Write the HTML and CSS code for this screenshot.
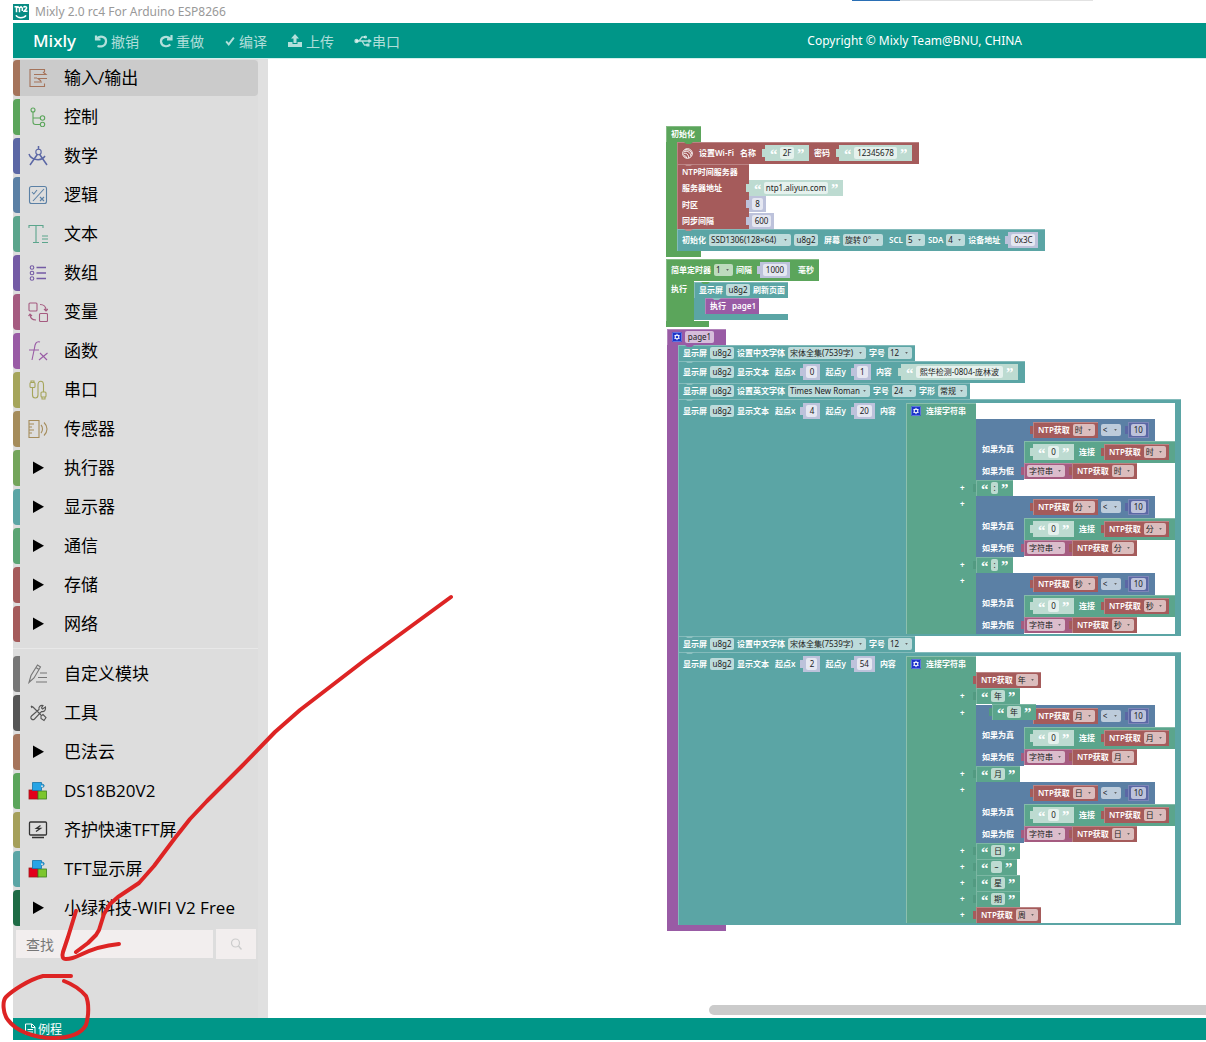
FILE: index.html
```html
<!DOCTYPE html>
<html lang="zh-CN">
<head>
<meta charset="utf-8">
<title>Mixly 2.0 rc4 For Arduino ESP8266</title>
<link rel="stylesheet" href="styles.css">
</head>
<body>
<svg class="defs" aria-hidden="true">
  <symbol id="gear" viewBox="0 0 10 10"><rect width="10" height="10" rx="1.5" fill="#1d35c9"/><rect x=".5" y=".5" width="9" height="9" rx="1" fill="none" stroke="#8fa0ee" stroke-width=".6"/><circle cx="5" cy="5" r="1.900" fill="none" stroke="#fff" stroke-width="1.100"/><path d="M5 1.800v1M5 7.200v1M2.300 3.400l.8.500M6.900 6.100l.8.500M7.700 3.400l-.8.500M3.100 6.100l-.8.500" stroke="#fff" stroke-width=".8"/></symbol>
  <symbol id="cubes" viewBox="0 0 20 20"><rect x="1" y="9" width="9" height="9" fill="#e3001b" stroke="#9c1a1a" stroke-width=".8"/><rect x="10" y="10" width="8.5" height="8" fill="#7cc62d" stroke="#3c7d1e" stroke-width=".8"/><path d="M4.500 1.500h9v2c3-1.600 4 3.600 0 2.600v3.400h-9z" fill="#27a4e5" stroke="#1573a8" stroke-width=".8"/><circle cx="14" cy="5.300" r="1" fill="#ddd"/></symbol>
  <symbol id="play" viewBox="0 0 20 20"><path d="M5 3.500v12.500L16 9.700z" fill="#000"/></symbol>
</svg>

<header class="titlebar">
  <svg class="logo" viewBox="0 0 16 16" aria-hidden="true"><rect width="16" height="16" fill="#078b83"/><path d="M1.500 2.800h2v5.500M3.500 4l1.500-1.200L6.500 4v4.300M6.500 4L8 2.800 9.300 4v3M10.500 3.500c1-1.500 3.500-1 3 .8-.3 1.200-2 1.700-2.500 3h3.500" fill="none" stroke="#fff" stroke-width="1.500"/><path d="M3 11.300c1.500 3.200 8 3.200 10 0" fill="none" stroke="#fff" stroke-width="1.500"/></svg>
  <span class="title">Mixly 2.0 rc4 For Arduino ESP8266</span>
  <span class="load"></span>
</header>

<div class="app">
  <div class="topbar">
    <strong class="brand">Mixly</strong>
    <nav class="actions">
      <button type="button"><svg class="ic14" viewBox="0 0 14 14"><path d="M2 1.500v4h4.500M2.500 5C5.500 1 12.500 2.500 12 7.600 11.600 12 7 13.200 3.500 12" fill="none" stroke="currentColor" stroke-width="2.200"/></svg>撤销</button>
      <button type="button"><svg class="ic14" viewBox="0 0 14 14"><path d="M12.500 1v4.500H8M11.500 5.200C8.500 1 1.700 3 2 7.600 2.400 12.500 8.500 13.500 11.300 10.500" fill="none" stroke="currentColor" stroke-width="2.200"/></svg>重做</button>
      <button type="button"><svg class="ic12" viewBox="0 0 12 14"><path d="M1.500 7.500l3 3.500 6-8" fill="none" stroke="currentColor" stroke-width="2.200"/></svg>编译</button>
      <button type="button"><svg class="ic16" viewBox="0 0 16 14"><path d="M8 0l4 4.500H9.500V9h-3V4.500H4z" fill="currentColor"/><path d="M1 8h4.500v2h5V8H15v5H1z" fill="currentColor"/></svg>上传</button>
      <button type="button" class="tight"><svg class="ic18" viewBox="0 0 18 14"><circle cx="2.500" cy="7" r="2.200" fill="currentColor"/><path d="M2 7h13M5 7l3-4h3M8 7l2.500 4H13" fill="none" stroke="currentColor" stroke-width="1.300"/><path d="M14.500 4.800L18 7l-3.500 2.200zM12.500 9.500h3v3h-3z" fill="currentColor"/><circle cx="11.500" cy="3" r="1.600" fill="currentColor"/></svg>串口</button>
    </nav>
    <span class="copyright">Copyright © Mixly Team@BNU, CHINA</span>
  </div>

  <main class="main">
    <aside class="side">
      <ul class="cats">
        <li class="cat c-io on"><svg viewBox="0 0 20 20"><path d="M16.500 4V1.500H2v17h14.500V15.500M6 6.500h12l-3-2.500M6 10h3M19 10.500h-9l3 2.500M6 14h8"/></svg>输入/输出</li>
        <li class="cat c-ctl"><svg viewBox="0 0 20 20"><circle cx="5" cy="3" r="2"/><circle cx="14.500" cy="11" r="2.200"/><circle cx="14.500" cy="17.500" r="2.200"/><path d="M5 5v10q0 2.500 2.500 2.500h4.800M5 11h7.300"/></svg>控制</li>
        <li class="cat c-math"><svg viewBox="0 0 20 20"><circle cx="10.500" cy="6" r="2.700"/><path d="M10.500 0v3.300M9.300 8.500L2 19M11.700 8.500L19 19M1 8c2 6 12 8 16 2" stroke-width="1.500"/></svg>数学</li>
        <li class="cat c-logic"><svg viewBox="0 0 20 20"><rect x="1.500" y="1.500" width="17" height="17" rx="2"/><path d="M16 4L5 16M4 7l1.800 2L9 5M12 12l4 4M16 12l-4 4"/></svg>逻辑</li>
        <li class="cat c-text"><svg viewBox="0 0 20 20"><path d="M1 4V1.500h14V4M8 1.500v17M5 18.500h6M14 12h6M14 15h6M14 18.500h6"/></svg>文本</li>
        <li class="cat c-list"><svg viewBox="0 0 20 20"><circle cx="4" cy="4.500" r="1.800"/><circle cx="4" cy="10" r="1.800"/><circle cx="4" cy="15.500" r="1.800"/><path d="M8.500 4.500H18M8.500 10H18M8.500 15.500H18" stroke-width="1.500"/></svg>数组</li>
        <li class="cat c-var"><svg viewBox="0 0 20 20"><rect x="1" y="1" width="8" height="8" rx="1"/><rect x="11.500" y="11.500" width="8" height="8" rx="1"/><path d="M12 2.500c4 0 6 2 6 6M16 7l2 2 2-2M8 18c-4 0-6-2-6-6M.500 14L2 12l2 2"/></svg>变量</li>
        <li class="cat c-fn"><svg viewBox="0 0 20 20"><path d="M12 1c-4-1-5 2-5.500 6L4 19M1 9h10M12 12l7 7M19.500 12L11 19"/></svg>函数</li>
        <li class="cat c-ser"><svg viewBox="0 0 20 20"><rect x="2" y="2.500" width="5" height="5" rx="1"/><rect x="13" y="12" width="5" height="5" rx="1"/><path d="M3 2.500V1h3v1.500M4.500 7.500V15c0 4 5.500 4 5.500 0V5c0-5 5.500-5 5.500 0v7M14 17v2h3v-2"/></svg>串口</li>
        <li class="cat c-sen"><svg viewBox="0 0 20 20"><path d="M1 1.500h10v17H1zM1 5h5M1 8h3M1 11h5M1 14h3M13 6c2 2 2 6 0 8M16 3.500c4 4 4 9 0 13"/></svg>传感器</li>
        <li class="cat c-act"><svg viewBox="0 0 20 20"><use href="#play"/></svg>执行器</li>
        <li class="cat c-dis"><svg viewBox="0 0 20 20"><use href="#play"/></svg>显示器</li>
        <li class="cat c-com"><svg viewBox="0 0 20 20"><use href="#play"/></svg>通信</li>
        <li class="cat c-sto"><svg viewBox="0 0 20 20"><use href="#play"/></svg>存储</li>
        <li class="cat c-net"><svg viewBox="0 0 20 20"><use href="#play"/></svg>网络</li>
        <li class="rule" role="separator"></li>
        <li class="cat c-cus"><svg viewBox="0 0 20 20"><path d="M1 18.500l2-7L9.500 1l3 2L6 14zM8 3.500l3 2M12 9h7M10 13.500h9M8 18h11"/></svg>自定义模块</li>
        <li class="cat c-tool"><svg viewBox="0 0 20 20"><path d="M3 3l2 1 8 8M4 5L3 3M13 13l2-1.500 3 3-2 3-3-2zM17.500 4l-3 2-1-1L15 2.500c-3-.5-4.500 1.500-4 4L3.500 13c-2 2 1 5 3 3l7-7.500c3 .5 4.500-1.500 4-4.500z"/></svg>工具</li>
        <li class="cat c-io"><svg viewBox="0 0 20 20"><use href="#play"/></svg>巴法云</li>
        <li class="cat c-ctl"><svg viewBox="0 0 20 20"><use href="#cubes"/></svg>DS18B20V2</li>
        <li class="cat c-qh"><svg viewBox="0 0 20 20"><path d="M2.500 2h15q1 0 1 1v11q0 1-1 1h-15q-1 0-1-1V3q0-1 1-1zM4 17.500h12M12.500 5.500l-4 2.800h4L8 11.500" stroke="#333" stroke-width="1.300"/></svg>齐护快速TFT屏</li>
        <li class="cat c-dis"><svg viewBox="0 0 20 20"><use href="#cubes"/></svg>TFT显示屏</li>
        <li class="cat c-xl"><svg viewBox="0 0 20 20"><use href="#play"/></svg>小绿科技-WIFI V2 Free</li>
      </ul>
      <form class="search">
        <input type="text" placeholder="查找" aria-label="查找">
        <button type="button" aria-label="搜索"><svg class="ic14" viewBox="0 0 14 14"><circle cx="6.500" cy="6" r="4" fill="none" stroke="#ccc" stroke-width="1.200"/><path d="M9.500 9l3 3.500" stroke="#ccc" stroke-width="1.400"/></svg></button>
      </form>
    </aside>

    <section class="canvas">
      <div class="stack at-init">
        <div class="row h16 cap35 green"><b>初始化</b></div>
        <div class="body green">
          <div class="row h22 red notch n-green">
            <svg class="ic11" viewBox="0 0 11 11" fill="none" stroke="#fff"><circle cx="5.500" cy="5.500" r="4.800"/><path d="M2 4c3-2 6 0 7 4M1.500 6c3-2 5 1 5.500 4M3 2c3-1 6 1 7 4M2 8c1-1 2 0 2.500 2"/></svg>
            <b>设置Wi-Fi</b><b>名称</b>
            <span class="val str light"><input class="f w14" value="2F" aria-label="名称"></span>
            <b>密码</b>
            <span class="val str light"><input class="f w43" value="12345678" aria-label="密码"></span>
          </div>
          <div class="line"><div class="row h16 ntp red notch n-red"><b>NTP时间服务器</b></div></div>
          <div class="line"><div class="row h16 ntp red plain"><b>服务器地址</b></div><span class="val join str light"><input class="f w64" value="ntp1.aliyun.com" aria-label="服务器地址"></span></div>
          <div class="line"><div class="row h17 ntp red plain"><b>时区</b></div><span class="val join num"><input class="f w11" value="8" aria-label="时区"></span></div>
          <div class="line"><div class="row h16 ntp red plain"><b>同步间隔</b></div><span class="val join num"><input class="f w19" value="600" aria-label="同步间隔"></span></div>
          <div class="row h22 teal notch n-red">
            <b>初始化</b><select class="f w82" aria-label="型号"><option>SSD1306(128×64)</option></select><input class="f w24 gapl" value="u8g2" aria-label="名称"><b class="gapl">屏幕</b><select class="f w40" aria-label="旋转"><option>旋转 0°</option></select><b class="gapl">SCL</b><select class="f w19" aria-label="SCL"><option>5</option></select><b>SDA</b><select class="f w19" aria-label="SDA"><option>4</option></select><b>设备地址</b><span class="val num"><input class="f w24" value="0x3C" aria-label="设备地址"></span>
          </div>
        </div>
        <div class="foot cap35 green"></div>
      </div>

      <div class="stack at-timer">
        <div class="row h22 green"><b>简单定时器</b><select class="f w19" aria-label="定时器"><option>1</option></select><b>间隔</b><span class="val num"><input class="f w24" value="1000" aria-label="间隔"></span><b class="gapl">毫秒</b></div>
        <div class="line">
          <div class="row exec green plain"><b>执行</b></div>
          <div class="sub">
            <div class="row h16 teal notch n-green"><b>显示屏</b><input class="f w24" value="u8g2" aria-label="显示屏"><b>刷新页面</b></div>
            <div class="body teal"><div class="row h16 purple notch n-teal"><b>执行</b><b>page1</b></div></div>
            <div class="foot teal"></div>
          </div>
        </div>
        <div class="foot cap43 green"></div>
      </div>

      <div class="stack at-page">
        <div class="row h16 cap59 purple"><svg class="ic10" aria-hidden="true"><use href="#gear"/></svg><input class="f w29 gapl" value="page1" aria-label="函数名"></div>
        <div class="body purple">
          <div class="row h16 teal notch n-purple"><b>显示屏</b><input class="f w24" value="u8g2" aria-label="显示屏"><b>设置中文字体</b><select class="f w78" aria-label="字体"><option>宋体全集(7539字)</option></select><b>字号</b><select class="f w24" aria-label="字号"><option>12</option></select></div>
          <div class="row h22 teal notch n-teal"><b>显示屏</b><input class="f w24" value="u8g2" aria-label="显示屏"><b>显示文本</b><b>起点x</b><span class="val num"><input class="f w11" value="0" aria-label="起点x"></span><b>起点y</b><span class="val num"><input class="f w11" value="1" aria-label="起点y"></span><b>内容</b><span class="val str light"><input class="f w87" value="熙华检测-0804-庞林波" aria-label="内容"></span></div>
          <div class="row h16 teal notch n-teal"><b>显示屏</b><input class="f w24" value="u8g2" aria-label="显示屏"><b>设置英文字体</b><select class="f w82" aria-label="字体"><option>Times New Roman</option></select><b>字号</b><select class="f w24" aria-label="字号"><option>24</option></select><b>字形</b><select class="f w29" aria-label="字形"><option>常规</option></select></div>

          <div class="big teal notch n-teal">
            <div class="bighead"><b>显示屏</b><input class="f w24" value="u8g2" aria-label="显示屏"><b>显示文本</b><b>起点x</b><span class="val num"><input class="f w11" value="4" aria-label="起点x"></span><b>起点y</b><span class="val num"><input class="f w15" value="20" aria-label="起点y"></span><b>内容</b></div>
            <div class="joinlist">
              <div class="joinhead"><svg class="ic10" aria-hidden="true"><use href="#gear"/></svg><b>连接字符串</b></div>
              <div class="slot"><div class="tern">
                <i></i><div class="cond"><span class="get"><b>NTP获取</b><select class="f" aria-label="时间"><option>时</option></select></span><select class="f w20" aria-label="比较"><option>&lt;</option></select><span class="val ten"><input class="f w15" value="10" aria-label="数值"></span></div>
                <b>如果为真</b><div class="then"><span class="val str light"><input class="f w11" value="0" aria-label="文本"></span><b>连接</b><span class="get"><b>NTP获取</b><select class="f" aria-label="时间"><option>时</option></select></span></div>
                <b>如果为假</b><div class="else"><span class="cast"><select class="f w38" aria-label="类型"><option>字符串</option></select></span><span class="get"><b>NTP获取</b><select class="f" aria-label="时间"><option>时</option></select></span></div>
              </div></div>
              <div class="slot plus"><span class="val join str mint"><input class="f w7" value=":" aria-label="文本"></span></div>
              <div class="slot plus"><div class="tern">
                <i></i><div class="cond"><span class="get"><b>NTP获取</b><select class="f" aria-label="时间"><option>分</option></select></span><select class="f w20" aria-label="比较"><option>&lt;</option></select><span class="val ten"><input class="f w15" value="10" aria-label="数值"></span></div>
                <b>如果为真</b><div class="then"><span class="val str light"><input class="f w11" value="0" aria-label="文本"></span><b>连接</b><span class="get"><b>NTP获取</b><select class="f" aria-label="时间"><option>分</option></select></span></div>
                <b>如果为假</b><div class="else"><span class="cast"><select class="f w38" aria-label="类型"><option>字符串</option></select></span><span class="get"><b>NTP获取</b><select class="f" aria-label="时间"><option>分</option></select></span></div>
              </div></div>
              <div class="slot plus"><span class="val join str mint"><input class="f w7" value=":" aria-label="文本"></span></div>
              <div class="slot plus"><div class="tern">
                <i></i><div class="cond"><span class="get"><b>NTP获取</b><select class="f" aria-label="时间"><option>秒</option></select></span><select class="f w20" aria-label="比较"><option>&lt;</option></select><span class="val ten"><input class="f w15" value="10" aria-label="数值"></span></div>
                <b>如果为真</b><div class="then"><span class="val str light"><input class="f w11" value="0" aria-label="文本"></span><b>连接</b><span class="get"><b>NTP获取</b><select class="f" aria-label="时间"><option>秒</option></select></span></div>
                <b>如果为假</b><div class="else"><span class="cast"><select class="f w38" aria-label="类型"><option>字符串</option></select></span><span class="get"><b>NTP获取</b><select class="f" aria-label="时间"><option>秒</option></select></span></div>
              </div></div>
            </div>
          </div>

          <div class="row h16 teal notch n-teal"><b>显示屏</b><input class="f w24" value="u8g2" aria-label="显示屏"><b>设置中文字体</b><select class="f w78" aria-label="字体"><option>宋体全集(7539字)</option></select><b>字号</b><select class="f w24" aria-label="字号"><option>12</option></select></div>

          <div class="big teal notch n-teal">
            <div class="bighead"><b>显示屏</b><input class="f w24" value="u8g2" aria-label="显示屏"><b>显示文本</b><b>起点x</b><span class="val num"><input class="f w11" value="2" aria-label="起点x"></span><b>起点y</b><span class="val num"><input class="f w15" value="54" aria-label="起点y"></span><b>内容</b></div>
            <div class="joinlist">
              <div class="joinhead"><svg class="ic10" aria-hidden="true"><use href="#gear"/></svg><b>连接字符串</b></div>
              <div class="slot"><span class="get"><b>NTP获取</b><select class="f" aria-label="时间"><option>年</option></select></span></div>
              <div class="slot plus tall"><span class="val join str mint"><input class="f w14" value="年" aria-label="文本"></span></div>
              <div class="slot plus"><div class="tern">
                <i></i><div class="cond"><span class="get"><b>NTP获取</b><select class="f" aria-label="时间"><option>月</option></select></span><select class="f w20" aria-label="比较"><option>&lt;</option></select><span class="val ten"><input class="f w15" value="10" aria-label="数值"></span></div>
                <b>如果为真</b><div class="then"><span class="val str light"><input class="f w11" value="0" aria-label="文本"></span><b>连接</b><span class="get"><b>NTP获取</b><select class="f" aria-label="时间"><option>月</option></select></span></div>
                <b>如果为假</b><div class="else"><span class="cast"><select class="f w38" aria-label="类型"><option>字符串</option></select></span><span class="get"><b>NTP获取</b><select class="f" aria-label="时间"><option>月</option></select></span></div>
              </div></div>
              <div class="slot plus"><span class="val join str mint"><input class="f w14" value="月" aria-label="文本"></span></div>
              <div class="slot plus"><div class="tern">
                <i></i><div class="cond"><span class="get"><b>NTP获取</b><select class="f" aria-label="时间"><option>日</option></select></span><select class="f w20" aria-label="比较"><option>&lt;</option></select><span class="val ten"><input class="f w15" value="10" aria-label="数值"></span></div>
                <b>如果为真</b><div class="then"><span class="val str light"><input class="f w11" value="0" aria-label="文本"></span><b>连接</b><span class="get"><b>NTP获取</b><select class="f" aria-label="时间"><option>日</option></select></span></div>
                <b>如果为假</b><div class="else"><span class="cast"><select class="f w38" aria-label="类型"><option>字符串</option></select></span><span class="get"><b>NTP获取</b><select class="f" aria-label="时间"><option>日</option></select></span></div>
              </div></div>
              <div class="slot plus"><span class="val join str mint"><input class="f w14" value="日" aria-label="文本"></span></div>
              <div class="slot plus"><span class="val join str mint"><input class="f w11" value="–" aria-label="文本"></span></div>
              <div class="slot plus"><span class="val join str mint"><input class="f w14" value="星" aria-label="文本"></span></div>
              <div class="slot plus"><span class="val join str mint"><input class="f w14" value="期" aria-label="文本"></span></div>
              <div class="slot plus"><span class="get"><b>NTP获取</b><select class="f" aria-label="时间"><option>周</option></select></span></div>
            </div>
          </div>
        </div>
        <div class="foot cap59 purple"></div>
      </div>

      <div class="stack at-loose"><span class="val join str mint"><input class="f w14" value="年" aria-label="文本"></span></div>
      <div class="hscroll"></div>
    </section>
  </main>

  <footer class="status"><a href="#examples"><svg class="ic12" viewBox="0 0 12 12" fill="none" stroke="#fff"><path d="M1.500 1H8l3 3v7.500H1.500zM7.500 1v3.500H11M3.500 6.500H9M3.500 9H9"/></svg>例程</a></footer>
</div>

<svg class="ink" width="480" height="1042" viewBox="0 0 480 1042" fill="none" stroke="#dd2424" stroke-linecap="round" stroke-linejoin="round" aria-hidden="true">
  <path stroke-width="4" d="M451 597L365 660 300 710 275 732 241 767 207 801 190 819 175 838 154 866 139 883 118 897 110 904 104 914 99 930 96 935 88 943 76 952"/>
  <path stroke-width="4" d="M76 911L68 937 63 952Q61 959 66 959 72 959 80 955 98 946 119 944"/>
  <path stroke-width="4" d="M71 976H43C28 980 12 991 6 997 2 1001 3 1014 8 1020 16 1031 34 1038 53 1038 69 1038 81 1034 86 1025 89 1015 89 1003 86 996 80 989 72 984 64 981"/>
</svg>
</body>
</html>
```
FILE: styles.css
```css
* { box-sizing: border-box; }
body {
  margin: 0;
  min-height: 100vh;
  padding: 0 0 2px 13px;
  display: flex;
  flex-direction: column;
  position: relative;
  background: #fff;
  font-family: "Noto Sans", "Noto Sans CJK SC", sans-serif;
  font-size: 14px;
  overflow: hidden;
}
button, input, select { font-family: inherit; }
.defs { position: absolute; width: 0; height: 0; }
.ic10 { width: 10px; height: 10px; flex: none; }
.ic11 { width: 11px; height: 11px; flex: none; }
.ic12 { width: 12px; height: 12px; flex: none; }
.ic14 { width: 14px; height: 14px; flex: none; }
.ic16 { width: 16px; height: 14px; flex: none; }
.ic18 { width: 18px; height: 14px; flex: none; }

/* window title */
.titlebar { height: 23px; display: flex; align-items: center; gap: 6px; position: relative; font-size: 12px; color: #999; }
.logo { width: 16px; height: 16px; }
.load { position: absolute; top: 0; right: 113px; width: 241px; height: 1px; background: linear-gradient(90deg, #2a6fb5 48px, #e2e2e2 48px); }

.app { flex: 1; display: flex; flex-direction: column; }
.topbar { height: 35px; background: #009688; display: flex; align-items: center; padding-left: 20px; color: #fff; }
.brand { font-size: 17px; font-weight: 500; width: 61px; }
.actions { flex: 1; display: flex; gap: 20px; }
.actions button { display: flex; align-items: center; gap: 3px; padding: 0; border: 0; background: none; font-size: 14px; color: rgba(255, 255, 255, .7); }
.actions .tight { gap: 0; }
.copyright { font-size: 12px; margin-right: 184px; }

.main { flex: 1; display: flex; border-top: 1px solid #d5efec; }
.side { width: 255px; flex: none; background: linear-gradient(90deg, #ddd 245px, #e0e0e0 245px); padding: 1px 10px 0 0; }
.cats { list-style: none; margin: 0; padding: 0; }
.cat { --c: #777; height: 36px; margin-bottom: 3px; border-left: 7px solid var(--c); border-radius: 4px; display: flex; align-items: center; gap: 16px; padding-left: 8px; font-family: "Open Sans", "Noto Sans CJK SC", sans-serif; font-size: 17px; line-height: 24px; color: #000; white-space: nowrap; }
.cat svg { width: 20px; height: 20px; flex: none; fill: none; stroke: var(--c); stroke-width: 1.1; }
.cat svg use { stroke: none; }
.cat.on { background: #cbcbcb; }
.c-io { --c: #a5745b; }
.c-ctl { --c: #5ba55b; }
.c-math { --c: #5b67a5; }
.c-logic { --c: #5b80a5; }
.c-text { --c: #5ba58c; }
.c-list { --c: #745ba5; }
.c-var { --c: #a55b80; }
.c-fn { --c: #995ba5; }
.c-ser { --c: #a5a55b; }
.c-sen { --c: #a58c5b; }
.c-act { --c: #74a55b; }
.c-dis { --c: #5ba5a5; }
.c-com { --c: #5ba574; }
.c-sto, .c-net { --c: #a55b5b; }
.c-cus { --c: #777; }
.c-tool { --c: #555; }
.c-qh { --c: #a5a05b; }
.c-xl { --c: #1e6b45; }
.rule { height: 1px; margin: 6px 0 7px; background: #e8e8e8; }
.search { display: flex; align-items: center; gap: 3px; padding: 0 2px 0 3px; }
.search input { flex: 1; min-width: 0; height: 28px; border: 0; padding: 0 10px; background: #f2eeee; font-size: 14px; }
.search input::placeholder { color: #777; }
.search button { width: 40px; height: 30px; border: 0; background: #f2eeee; padding: 0; display: flex; align-items: center; justify-content: center; }
.status { height: 22px; background: #009688; padding-left: 11px; display: flex; align-items: center; }
.status a { display: flex; align-items: center; gap: 2px; color: #fff; font-size: 12px; text-decoration: none; }

/* block canvas */
.canvas { flex: 1; position: relative; font-size: 8px; line-height: 10px; color: #fff; white-space: nowrap; }
.stack { position: absolute; }
.at-init { left: 398px; top: 67px; }
.at-timer { left: 398px; top: 200px; }
.at-page { left: 399px; top: 270px; }
.at-loose { left: 724px; top: 645px; }
.hscroll { position: absolute; left: 441px; right: 0; bottom: 3px; height: 10px; border-radius: 5px 0 0 5px; background: #cbcbcb; }

.green { background: #5ba55b; }
.red { background: #a55b5b; }
.teal { background: #5ba5a5; }
.purple { background: #995ba5; }

.canvas b { font-weight: 600; }
.row, .bighead, .joinhead, .get, .cond, .then, .else, .cast, .val { display: flex; align-items: center; gap: 3px; }
.row { width: max-content; padding: 0 5px; position: relative; box-shadow: inset 1px 1px rgba(255, 255, 255, .25); }
.row.plain { box-shadow: inset 1px 0 rgba(255, 255, 255, .25); }
.row b + b, .bighead b + b, .ic11 + b { margin-left: 3px; }
.gapl { margin-left: 3px; }
.h16 { height: 16px; }
.h17 { height: 17px; }
.h22 { height: 22px; }
.row.h16 { padding-right: 3px; }
.body { padding-left: 11px; }
.body.green { background: linear-gradient(#5ba55b, #5ba55b) 0 0 / 11px 100% no-repeat; }
.body.teal { background: linear-gradient(#5ba5a5, #5ba5a5) 0 0 / 11px 100% no-repeat; }
.body.purple { background: linear-gradient(#995ba5, #995ba5) 0 0 / 11px 100% no-repeat; }
.foot { height: 6px; }
.cap35 { width: 35px; }
.cap43 { width: 43px; }
.cap59 { width: 59px; }
.line { display: flex; }
.row.ntp { width: 72px; }
.row.exec { width: 28px; align-items: flex-start; padding-top: 3px; }
.sub { padding: 1px 0; }
.notch::before { content: ""; position: absolute; left: 7px; top: 0; width: 9px; height: 2px; clip-path: polygon(0 0, 100% 0, 75% 100%, 25% 100%); }
.n-green::before { background: #5ba55b; }
.n-red::before { background: #c08a8a; }
.n-purple::before { background: #995ba5; }
.n-teal::before { background: #8cc0c0; }

.f { height: 12px; border: 0; border-radius: 2px; padding: 0 2px; margin: 0; background: rgba(255, 255, 255, .6); font-size: 8px; line-height: 12px; color: #222; text-align: center; outline: 0; flex: none; }
select.f { appearance: none; text-align: left; background: rgba(255, 255, 255, .6) url("data:image/svg+xml,%3Csvg xmlns='http://www.w3.org/2000/svg' viewBox='0 0 4 3'%3E%3Cpath d='M0 0h4L2 3z' fill='%23666'/%3E%3C/svg%3E") right 4px center / 3px 2px no-repeat; }
input.f { padding: 0; }
.get .f { width: 22px; }
.w7 { width: 7px; }
.w11 { width: 11px; }
.w14 { width: 14px; }
.w15 { width: 15px; }
.w19 { width: 19px; }
.w20 { width: 20px; }
.w24 { width: 24px; }
.w29 { width: 29px; }
.w38 { width: 38px; }
.w40 { width: 40px; }
.w43 { width: 43px; }
.w64 { width: 64px; }
.w78 { width: 78px; }
.w82 { width: 82px; }
.w87 { width: 87px; }

.val { position: relative; height: 16px; padding: 0 3px; margin: 0 2px 0 5px; flex: none; }
.val.join { margin: 0; }
.str { padding: 0 5px; }
.str::before, .str::after { width: 7px; height: 14px; overflow: hidden; font: 700 15px/17px "Liberation Serif", serif; color: #fff; }
.str::before { content: "“"; }
.str::after { content: "”"; }
/* the offset shadow is the puzzle tab on the left edge */
.light { background: #bddbd1; box-shadow: -7px 0 0 -4px #bddbd1; }
.mint { background: #5ba58c; box-shadow: -7px 0 0 -4px #529a81, inset 1px 1px rgba(255, 255, 255, .2); }
.num { background: #bdc2db; box-shadow: -7px 0 0 -4px #bdc2db; }
.ten { background: #5b67a5; box-shadow: -7px 0 0 -4px #5b67a5, inset 0 0 0 1px #7c86b7; }
.get { height: 16px; padding: 0 3px 0 5px; background: #a55b5b; box-shadow: -7px 0 0 -4px #a55b5b, inset 1px 1px rgba(255, 255, 255, .25); flex: none; }
.row > .light { margin-left: 6px; }

.big { display: flex; position: relative; width: 503px; padding: 4px 6px 2px 0; box-shadow: inset 1px 1px rgba(255, 255, 255, .25); }
.bighead { width: 228px; height: 16px; padding-left: 5px; flex: none; }
.joinlist { flex: 1; background: linear-gradient(90deg, #5ba58c 70px, #fff 70px); box-shadow: inset 1px 1px rgba(255, 255, 255, .3); }
.joinhead { width: 70px; height: 16px; padding-left: 5px; gap: 5px; }
.slot { display: flex; padding-left: 70px; position: relative; }
.slot.tall { padding-bottom: 1px; }
.slot.plus::before { content: "+"; position: absolute; left: 54px; top: 3px; font-weight: 700; }
.tern { display: grid; grid-template-columns: 48px auto; grid-template-rows: 22px 22px 17px; align-items: start; background: linear-gradient(#5b80a5, #5b80a5) 0 0 / 48px 100% no-repeat; }
.tern > b { padding: 3px 0 0 6px; }
.cond { width: 131px; height: 22px; padding-left: 9px; background: #5b80a5; }
.cond > .ten { margin-left: 4px; }
.then { width: 151px; height: 22px; padding-left: 9px; background: #5ba58c; box-shadow: inset 1px 1px rgba(255, 255, 255, .25); }
.then > .val { margin: 0 2px 0 0; }
.then > .get { margin-left: 6px; }
.else { height: 17px; gap: 0; align-items: flex-start; }
.cast { width: 48px; height: 16px; padding-left: 3px; background: #a55b80; box-shadow: -7px 0 0 -4px #a55b80, inset 1px 1px rgba(255, 255, 255, .25); }

/* hand-drawn annotation */
.ink { position: absolute; left: 0; top: 0; pointer-events: none; }
```
